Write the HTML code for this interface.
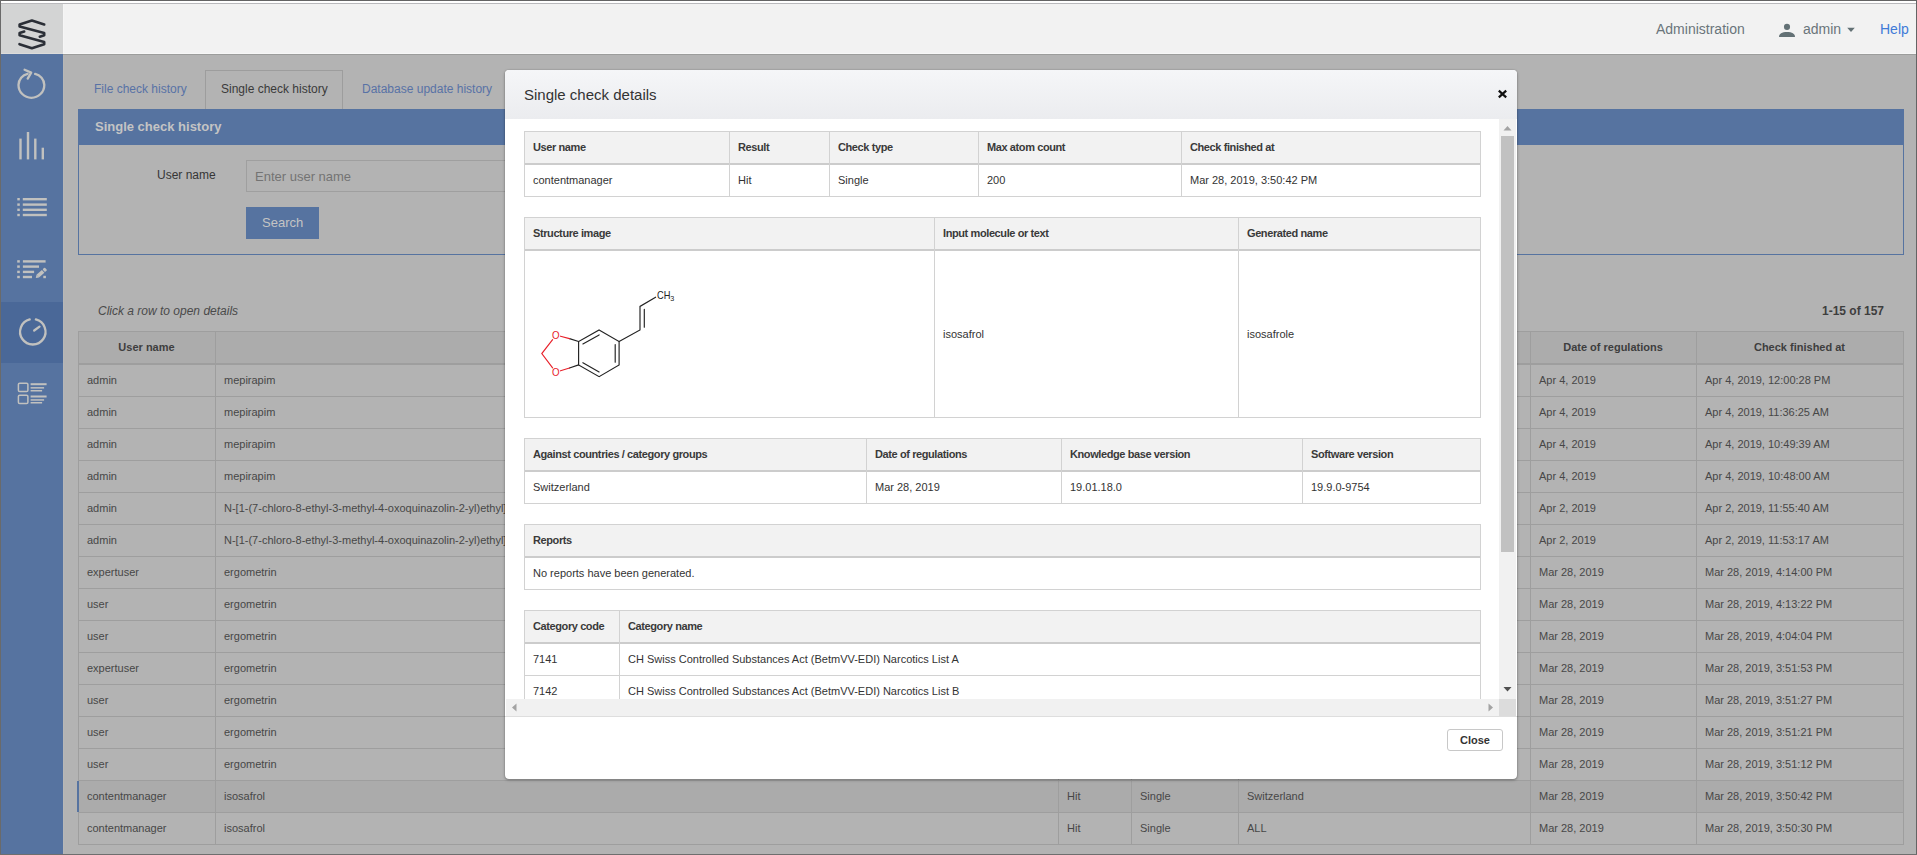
<!DOCTYPE html>
<html><head><meta charset="utf-8">
<style>
*{box-sizing:border-box;margin:0;padding:0}
html,body{width:1917px;height:855px;overflow:hidden;background:#b3b3b3;font-family:"Liberation Sans",sans-serif}
.a{position:absolute}
.t{position:absolute;white-space:nowrap}
.hl{position:absolute;height:1px}
.vl{position:absolute;width:1px}
.bgtxt{color:#474747;font-size:11px;line-height:11px}
.bghd{color:#3e3e3e;font-size:11px;line-height:11px;font-weight:bold}
.mh{font-size:11px;line-height:11px;font-weight:bold;letter-spacing:-0.4px;color:#3a3a3a}
.mb{font-size:11px;line-height:11px;color:#333}
</style></head><body>
<div class="a" style="left:1px;top:4px;width:1915px;height:50px;background:#f2f2f2"></div>
<div class="a" style="left:63px;top:4px;width:1px;height:50px;background:#f5f5f5"></div>
<div class="a" style="left:1px;top:53px;width:1915px;height:1px;background:#f7f7f7"></div>
<div class="a" style="left:1px;top:4px;width:62px;height:50px;background:#d3d4d4"></div>
<div class="a" style="left:1px;top:53px;width:62px;height:1px;background:#dcdcdb"></div>
<div class="a" style="left:1px;top:54px;width:62px;height:800px;background:#5673a0"></div>

<div class="a" style="left:63px;top:54px;width:1853px;height:1px;background:#9c9d9c"></div>
<div class="a" style="left:63px;top:55px;width:1px;height:799px;background:#b7b7b7"></div>
<div class="a" style="left:205px;top:70px;width:138px;height:40px;border:1px solid #9d9d9d;border-bottom:none"></div>
<div class="t" style="left:94px;top:83px;font-size:12px;line-height:12px;color:#5872a6">File check history</div>
<div class="t" style="left:221px;top:83px;font-size:12px;line-height:12px;color:#3a3a3a">Single check history</div>
<div class="t" style="left:362px;top:83px;font-size:12px;line-height:12px;color:#5872a6">Database update history</div>
<div class="a" style="left:78px;top:109px;width:1826px;height:36px;background:#5673a0"></div>
<div class="a" style="left:78px;top:145px;width:1826px;height:110px;border:1px solid #5673a0;border-top:none"></div>
<div class="t" style="left:95px;top:120px;font-size:13px;line-height:13px;font-weight:bold;color:#c4c4c4">Single check history</div>
<div class="t" style="left:157px;top:169px;font-size:12px;line-height:12px;color:#363636">User name</div>
<div class="a" style="left:246px;top:160px;width:600px;height:32px;border:1px solid #9f9f9f"></div>
<div class="t" style="left:255px;top:170px;font-size:13px;line-height:13px;color:#737373">Enter user name</div>
<div class="a" style="left:246px;top:207px;width:73px;height:32px;background:#5673a0"></div>
<div class="t" style="left:262px;top:216px;font-size:13px;line-height:13px;color:#c4c4c4">Search</div>
<div class="t" style="left:98px;top:305px;font-size:12px;line-height:12px;font-style:italic;color:#4a4a4a">Click a row to open details</div>
<div class="t" style="left:1822px;top:305px;font-size:12px;line-height:12px;font-weight:bold;color:#3e3e3e">1-15 of 157</div>
<div class="a" style="left:78px;top:331px;width:1826px;height:32px;background:#acacac"></div>
<div class="a" style="left:78px;top:780px;width:1826px;height:32px;background:#ababab"></div>
<div class="hl" style="left:78px;top:331px;width:1826px;background:#9e9e9e"></div>
<div class="hl" style="left:78px;top:363px;width:1826px;height:2px;background:#9e9e9e"></div>
<div class="hl" style="left:78px;top:396px;width:1826px;background:#9e9e9e"></div>
<div class="hl" style="left:78px;top:428px;width:1826px;background:#9e9e9e"></div>
<div class="hl" style="left:78px;top:460px;width:1826px;background:#9e9e9e"></div>
<div class="hl" style="left:78px;top:492px;width:1826px;background:#9e9e9e"></div>
<div class="hl" style="left:78px;top:524px;width:1826px;background:#9e9e9e"></div>
<div class="hl" style="left:78px;top:556px;width:1826px;background:#9e9e9e"></div>
<div class="hl" style="left:78px;top:588px;width:1826px;background:#9e9e9e"></div>
<div class="hl" style="left:78px;top:620px;width:1826px;background:#9e9e9e"></div>
<div class="hl" style="left:78px;top:652px;width:1826px;background:#9e9e9e"></div>
<div class="hl" style="left:78px;top:684px;width:1826px;background:#9e9e9e"></div>
<div class="hl" style="left:78px;top:716px;width:1826px;background:#9e9e9e"></div>
<div class="hl" style="left:78px;top:748px;width:1826px;background:#9e9e9e"></div>
<div class="hl" style="left:78px;top:780px;width:1826px;background:#9e9e9e"></div>
<div class="hl" style="left:78px;top:812px;width:1826px;background:#9e9e9e"></div>
<div class="hl" style="left:78px;top:844px;width:1826px;background:#9e9e9e"></div>
<div class="vl" style="left:78px;top:331px;height:514px;background:#9e9e9e"></div>
<div class="vl" style="left:215px;top:331px;height:514px;background:#9e9e9e"></div>
<div class="vl" style="left:1058px;top:331px;height:514px;background:#9e9e9e"></div>
<div class="vl" style="left:1131px;top:331px;height:514px;background:#9e9e9e"></div>
<div class="vl" style="left:1238px;top:331px;height:514px;background:#9e9e9e"></div>
<div class="vl" style="left:1530px;top:331px;height:514px;background:#9e9e9e"></div>
<div class="vl" style="left:1696px;top:331px;height:514px;background:#9e9e9e"></div>
<div class="vl" style="left:1903px;top:331px;height:514px;background:#9e9e9e"></div>
<div class="a" style="left:77px;top:781px;width:2px;height:31px;background:#5673a0"></div>
<div class="t bghd" style="left:78px;width:137px;text-align:center;top:342px">User name</div>
<div class="t bghd" style="left:1530px;width:166px;text-align:center;top:342px">Date of regulations</div>
<div class="t bghd" style="left:1696px;width:207px;text-align:center;top:342px">Check finished at</div>
<div class="t bgtxt" style="left:87px;top:375px">admin</div>
<div class="t bgtxt" style="left:224px;top:375px">mepirapim</div>
<div class="t bgtxt" style="left:1539px;top:375px">Apr 4, 2019</div>
<div class="t bgtxt" style="left:1705px;top:375px">Apr 4, 2019, 12:00:28 PM</div>
<div class="t bgtxt" style="left:87px;top:407px">admin</div>
<div class="t bgtxt" style="left:224px;top:407px">mepirapim</div>
<div class="t bgtxt" style="left:1539px;top:407px">Apr 4, 2019</div>
<div class="t bgtxt" style="left:1705px;top:407px">Apr 4, 2019, 11:36:25 AM</div>
<div class="t bgtxt" style="left:87px;top:439px">admin</div>
<div class="t bgtxt" style="left:224px;top:439px">mepirapim</div>
<div class="t bgtxt" style="left:1539px;top:439px">Apr 4, 2019</div>
<div class="t bgtxt" style="left:1705px;top:439px">Apr 4, 2019, 10:49:39 AM</div>
<div class="t bgtxt" style="left:87px;top:471px">admin</div>
<div class="t bgtxt" style="left:224px;top:471px">mepirapim</div>
<div class="t bgtxt" style="left:1539px;top:471px">Apr 4, 2019</div>
<div class="t bgtxt" style="left:1705px;top:471px">Apr 4, 2019, 10:48:00 AM</div>
<div class="t bgtxt" style="left:87px;top:503px">admin</div>
<div class="t bgtxt" style="left:224px;top:503px">N-[1-(7-chloro-8-ethyl-3-methyl-4-oxoquinazolin-2-yl)ethyl]-N-methylbenzamide</div>
<div class="t bgtxt" style="left:1539px;top:503px">Apr 2, 2019</div>
<div class="t bgtxt" style="left:1705px;top:503px">Apr 2, 2019, 11:55:40 AM</div>
<div class="t bgtxt" style="left:87px;top:535px">admin</div>
<div class="t bgtxt" style="left:224px;top:535px">N-[1-(7-chloro-8-ethyl-3-methyl-4-oxoquinazolin-2-yl)ethyl]-N-methylbenzamide</div>
<div class="t bgtxt" style="left:1539px;top:535px">Apr 2, 2019</div>
<div class="t bgtxt" style="left:1705px;top:535px">Apr 2, 2019, 11:53:17 AM</div>
<div class="t bgtxt" style="left:87px;top:567px">expertuser</div>
<div class="t bgtxt" style="left:224px;top:567px">ergometrin</div>
<div class="t bgtxt" style="left:1539px;top:567px">Mar 28, 2019</div>
<div class="t bgtxt" style="left:1705px;top:567px">Mar 28, 2019, 4:14:00 PM</div>
<div class="t bgtxt" style="left:87px;top:599px">user</div>
<div class="t bgtxt" style="left:224px;top:599px">ergometrin</div>
<div class="t bgtxt" style="left:1539px;top:599px">Mar 28, 2019</div>
<div class="t bgtxt" style="left:1705px;top:599px">Mar 28, 2019, 4:13:22 PM</div>
<div class="t bgtxt" style="left:87px;top:631px">user</div>
<div class="t bgtxt" style="left:224px;top:631px">ergometrin</div>
<div class="t bgtxt" style="left:1539px;top:631px">Mar 28, 2019</div>
<div class="t bgtxt" style="left:1705px;top:631px">Mar 28, 2019, 4:04:04 PM</div>
<div class="t bgtxt" style="left:87px;top:663px">expertuser</div>
<div class="t bgtxt" style="left:224px;top:663px">ergometrin</div>
<div class="t bgtxt" style="left:1539px;top:663px">Mar 28, 2019</div>
<div class="t bgtxt" style="left:1705px;top:663px">Mar 28, 2019, 3:51:53 PM</div>
<div class="t bgtxt" style="left:87px;top:695px">user</div>
<div class="t bgtxt" style="left:224px;top:695px">ergometrin</div>
<div class="t bgtxt" style="left:1539px;top:695px">Mar 28, 2019</div>
<div class="t bgtxt" style="left:1705px;top:695px">Mar 28, 2019, 3:51:27 PM</div>
<div class="t bgtxt" style="left:87px;top:727px">user</div>
<div class="t bgtxt" style="left:224px;top:727px">ergometrin</div>
<div class="t bgtxt" style="left:1539px;top:727px">Mar 28, 2019</div>
<div class="t bgtxt" style="left:1705px;top:727px">Mar 28, 2019, 3:51:21 PM</div>
<div class="t bgtxt" style="left:87px;top:759px">user</div>
<div class="t bgtxt" style="left:224px;top:759px">ergometrin</div>
<div class="t bgtxt" style="left:1539px;top:759px">Mar 28, 2019</div>
<div class="t bgtxt" style="left:1705px;top:759px">Mar 28, 2019, 3:51:12 PM</div>
<div class="t bgtxt" style="left:87px;top:791px">contentmanager</div>
<div class="t bgtxt" style="left:224px;top:791px">isosafrol</div>
<div class="t bgtxt" style="left:1067px;top:791px">Hit</div>
<div class="t bgtxt" style="left:1140px;top:791px">Single</div>
<div class="t bgtxt" style="left:1247px;top:791px">Switzerland</div>
<div class="t bgtxt" style="left:1539px;top:791px">Mar 28, 2019</div>
<div class="t bgtxt" style="left:1705px;top:791px">Mar 28, 2019, 3:50:42 PM</div>
<div class="t bgtxt" style="left:87px;top:823px">contentmanager</div>
<div class="t bgtxt" style="left:224px;top:823px">isosafrol</div>
<div class="t bgtxt" style="left:1067px;top:823px">Hit</div>
<div class="t bgtxt" style="left:1140px;top:823px">Single</div>
<div class="t bgtxt" style="left:1247px;top:823px">ALL</div>
<div class="t bgtxt" style="left:1539px;top:823px">Mar 28, 2019</div>
<div class="t bgtxt" style="left:1705px;top:823px">Mar 28, 2019, 3:50:30 PM</div>
<div class="a" style="left:505px;top:70px;width:1012px;height:709px;background:#fff;border-radius:4px;box-shadow:0 1px 3px rgba(0,0,0,0.35),0 0 1px rgba(0,0,0,0.4)"></div>
<div class="a" style="left:505px;top:70px;width:1012px;height:49px;background:linear-gradient(#f5f6f8,#ebecef);border-radius:4px 4px 0 0"></div>
<div class="t" style="left:524px;top:87px;font-size:15px;line-height:15px;color:#333333">Single check details</div>
<svg class="a" style="left:1496px;top:88px" width="13" height="12"><path d="M2.8,2.6 L10.2,9.4 M10.2,2.6 L2.8,9.4" stroke="#111" stroke-width="2.2" stroke-linecap="butt"/></svg>
<div class="a" style="left:506px;top:119px;width:993px;height:580px;overflow:hidden">
<div class="a" style="left:-506px;top:-119px;width:1917px;height:855px">
<div class="a" style="left:524px;top:131px;width:957px;height:33px;background:#f2f2f2"></div>
<div class="hl" style="left:524px;top:131px;width:957px;background:#d2d2d2"></div>
<div class="hl" style="left:524px;top:163px;width:957px;height:2px;background:#cccccc"></div>
<div class="hl" style="left:524px;top:196px;width:957px;background:#d2d2d2"></div>
<div class="vl" style="left:524px;top:131px;height:66px;background:#d2d2d2"></div>
<div class="vl" style="left:729px;top:131px;height:66px;background:#d2d2d2"></div>
<div class="vl" style="left:829px;top:131px;height:66px;background:#d2d2d2"></div>
<div class="vl" style="left:978px;top:131px;height:66px;background:#d2d2d2"></div>
<div class="vl" style="left:1181px;top:131px;height:66px;background:#d2d2d2"></div>
<div class="vl" style="left:1480px;top:131px;height:66px;background:#d2d2d2"></div>
<div class="t mh" style="left:533px;top:142px">User name</div>
<div class="t mh" style="left:738px;top:142px">Result</div>
<div class="t mh" style="left:838px;top:142px">Check type</div>
<div class="t mh" style="left:987px;top:142px">Max atom count</div>
<div class="t mh" style="left:1190px;top:142px">Check finished at</div>
<div class="t mb" style="left:533px;top:175px">contentmanager</div>
<div class="t mb" style="left:738px;top:175px">Hit</div>
<div class="t mb" style="left:838px;top:175px">Single</div>
<div class="t mb" style="left:987px;top:175px">200</div>
<div class="t mb" style="left:1190px;top:175px">Mar 28, 2019, 3:50:42 PM</div>
<div class="a" style="left:524px;top:217px;width:957px;height:33px;background:#f2f2f2"></div>
<div class="hl" style="left:524px;top:217px;width:957px;background:#d2d2d2"></div>
<div class="hl" style="left:524px;top:249px;width:957px;height:2px;background:#cccccc"></div>
<div class="hl" style="left:524px;top:417px;width:957px;background:#d2d2d2"></div>
<div class="vl" style="left:524px;top:217px;height:201px;background:#d2d2d2"></div>
<div class="vl" style="left:934px;top:217px;height:201px;background:#d2d2d2"></div>
<div class="vl" style="left:1238px;top:217px;height:201px;background:#d2d2d2"></div>
<div class="vl" style="left:1480px;top:217px;height:201px;background:#d2d2d2"></div>
<div class="t mh" style="left:533px;top:228px">Structure image</div>
<div class="t mh" style="left:943px;top:228px">Input molecule or text</div>
<div class="t mh" style="left:1247px;top:228px">Generated name</div>
<div class="t mb" style="left:943px;top:329px">isosafrol</div>
<div class="t mb" style="left:1247px;top:329px">isosafrole</div>
<div class="a" style="left:524px;top:438px;width:957px;height:33px;background:#f2f2f2"></div>
<div class="hl" style="left:524px;top:438px;width:957px;background:#d2d2d2"></div>
<div class="hl" style="left:524px;top:470px;width:957px;height:2px;background:#cccccc"></div>
<div class="hl" style="left:524px;top:503px;width:957px;background:#d2d2d2"></div>
<div class="vl" style="left:524px;top:438px;height:66px;background:#d2d2d2"></div>
<div class="vl" style="left:866px;top:438px;height:66px;background:#d2d2d2"></div>
<div class="vl" style="left:1061px;top:438px;height:66px;background:#d2d2d2"></div>
<div class="vl" style="left:1302px;top:438px;height:66px;background:#d2d2d2"></div>
<div class="vl" style="left:1480px;top:438px;height:66px;background:#d2d2d2"></div>
<div class="t mh" style="left:533px;top:449px">Against countries / category groups</div>
<div class="t mh" style="left:875px;top:449px">Date of regulations</div>
<div class="t mh" style="left:1070px;top:449px">Knowledge base version</div>
<div class="t mh" style="left:1311px;top:449px">Software version</div>
<div class="t mb" style="left:533px;top:482px">Switzerland</div>
<div class="t mb" style="left:875px;top:482px">Mar 28, 2019</div>
<div class="t mb" style="left:1070px;top:482px">19.01.18.0</div>
<div class="t mb" style="left:1311px;top:482px">19.9.0-9754</div>
<div class="a" style="left:524px;top:524px;width:957px;height:33px;background:#f2f2f2"></div>
<div class="hl" style="left:524px;top:524px;width:957px;background:#d2d2d2"></div>
<div class="hl" style="left:524px;top:556px;width:957px;height:2px;background:#cccccc"></div>
<div class="hl" style="left:524px;top:589px;width:957px;background:#d2d2d2"></div>
<div class="vl" style="left:524px;top:524px;height:66px;background:#d2d2d2"></div>
<div class="vl" style="left:1480px;top:524px;height:66px;background:#d2d2d2"></div>
<div class="t mh" style="left:533px;top:535px">Reports</div>
<div class="t mb" style="left:533px;top:568px">No reports have been generated.</div>
<div class="a" style="left:524px;top:610px;width:957px;height:33px;background:#f2f2f2"></div>
<div class="hl" style="left:524px;top:610px;width:957px;background:#d2d2d2"></div>
<div class="hl" style="left:524px;top:642px;width:957px;height:2px;background:#cccccc"></div>
<div class="hl" style="left:524px;top:675px;width:957px;background:#d2d2d2"></div>
<div class="hl" style="left:524px;top:707px;width:957px;background:#d2d2d2"></div>
<div class="hl" style="left:524px;top:739px;width:957px;background:#d2d2d2"></div>
<div class="vl" style="left:524px;top:610px;height:130px;background:#d2d2d2"></div>
<div class="vl" style="left:619px;top:610px;height:130px;background:#d2d2d2"></div>
<div class="vl" style="left:1480px;top:610px;height:130px;background:#d2d2d2"></div>
<div class="t mh" style="left:533px;top:621px">Category code</div>
<div class="t mh" style="left:628px;top:621px">Category name</div>
<div class="t mb" style="left:533px;top:654px">7141</div>
<div class="t mb" style="left:628px;top:654px">CH Swiss Controlled Substances Act (BetmVV-EDI) Narcotics List A</div>
<div class="t mb" style="left:533px;top:686px">7142</div>
<div class="t mb" style="left:628px;top:686px">CH Swiss Controlled Substances Act (BetmVV-EDI) Narcotics List B</div>
<div class="t mb" style="left:533px;top:718px">7143</div>
<div class="t mb" style="left:628px;top:718px">CH Swiss Controlled Substances Act (BetmVV-EDI) Narcotics List C</div>
<svg class="a" style="left:0;top:0" width="700" height="420">
<g stroke="#222" stroke-width="1.15" fill="none" stroke-linecap="round">
<path d="M599.1,329.9 L619.1,341.5 L619.1,364.9 L599.1,376.7 L578.6,364.9 L578.6,341.5 Z"/>
<path d="M582.9,344 L599.1,334.9 M615.2,344.5 L615.2,362.2 M582.9,362.7 L599.1,372"/>
<path d="M569.5,338.6 L578.6,341.5 M569.5,368 L578.6,364.9"/>
<path d="M619.1,341.5 L640,329.9 L640,306.4 L655.6,297.2 M644.3,309.2 L644.3,327.2"/>
</g>
<g stroke="#e8202a" stroke-width="1.15" fill="none" stroke-linecap="round">
<path d="M552.6,339.6 L541.8,353.6 L552.6,367.8"/>
<path d="M560.5,336.2 L569.5,338.6 M560.5,370.8 L569.5,368"/>
</g>
<g font-family="Liberation Sans" font-size="10.5px" fill="#e8202a">
<text x="551.9" y="338.6" textLength="7.6" lengthAdjust="spacingAndGlyphs">O</text><text x="551.9" y="376.2" textLength="7.6" lengthAdjust="spacingAndGlyphs">O</text>
</g>
<g font-family="Liberation Sans" fill="#222">
<text x="657" y="298.8" font-size="10.5px" textLength="13.4" lengthAdjust="spacingAndGlyphs">CH</text><text x="670.2" y="301" font-size="7px" textLength="4" lengthAdjust="spacingAndGlyphs">3</text>
</g>
</svg>
</div></div>
<div class="a" style="left:1499px;top:119px;width:17px;height:580px;background:#f1f1f1"></div>
<div class="a" style="left:1501px;top:136px;width:13px;height:416px;background:#c1c1c1"></div>
<svg class="a" style="left:1499px;top:119px" width="17" height="580"><path d="M4.5,11.5 L12.5,11.5 L8.5,7 Z" fill="#a3a3a3"/><path d="M4.5,568 L12.5,568 L8.5,572.5 Z" fill="#505050"/></svg>
<div class="a" style="left:506px;top:699px;width:993px;height:17px;background:#f1f1f1"></div>
<div class="a" style="left:1499px;top:699px;width:17px;height:17px;background:#dcdcdc"></div>
<svg class="a" style="left:506px;top:699px" width="993" height="17"><path d="M10.5,4.5 L10.5,12.5 L6,8.5 Z" fill="#a3a3a3"/><path d="M982.5,4.5 L982.5,12.5 L987,8.5 Z" fill="#a3a3a3"/></svg>
<div class="hl" style="left:505px;top:716px;width:1012px;background:#dedede"></div>
<div class="a" style="left:1447px;top:729px;width:56px;height:22px;border:1px solid #c8c8c8;border-radius:3px;background:#fff"></div>
<div class="t" style="left:1460px;top:735px;font-size:11px;line-height:11px;font-weight:bold;color:#333333">Close</div>
<!-- sidebar -->
<div class="a" style="left:1px;top:302px;width:62px;height:61px;background:#4a6898"></div>
<svg class="a" style="left:0;top:0" width="64" height="420">
<g fill="#c1c1bf"><path d="M35.1,73.9 A11.8,11.8 0 0 1 44.3,84.9 A12.9,12.9 0 0 1 18.5,84.9 A11.8,11.8 0 0 1 27.6,73.8" fill="none" stroke="#c1c1bf" stroke-width="2.3" stroke-linecap="round"/><path d="M24.6,69.8 L31.2,72.6 L27.7,78.6" fill="none" stroke="#c1c1bf" stroke-width="2.3" stroke-linecap="round" stroke-linejoin="round"/><path d="M35.87,319.48 A12.7,12.7 0 1 1 29.73,319.48" fill="none" stroke="#c1c1bf" stroke-width="2.3" stroke-linecap="round"/><path d="M34.2,330.5 L39.5,326.6" fill="none" stroke="#c1c1bf" stroke-width="2.3" stroke-linecap="round"/><rect x="19.3" y="138.6" width="2.4" height="20.8"/><rect x="26.8" y="132" width="2.4" height="27.4"/><rect x="34.1" y="138.6" width="2.4" height="20.8"/><rect x="41.6" y="147.7" width="2.4" height="11.7"/><rect x="17.3" y="198.0" width="2.5" height="2.4"/><rect x="22.8" y="198.0" width="24" height="2.4"/><rect x="17.3" y="203.4" width="2.5" height="2.4"/><rect x="22.8" y="203.4" width="24" height="2.4"/><rect x="17.3" y="208.6" width="2.5" height="2.4"/><rect x="22.8" y="208.6" width="24" height="2.4"/><rect x="17.3" y="213.8" width="2.5" height="2.4"/><rect x="22.8" y="213.8" width="24" height="2.4"/><rect x="17.2" y="260.2" width="2.6" height="2.4"/><rect x="22.9" y="260.2" width="22.7" height="2.4"/><rect x="17.2" y="265.4" width="2.6" height="2.4"/><rect x="22.9" y="265.4" width="16.1" height="2.4"/><rect x="17.2" y="270.7" width="2.6" height="2.4"/><rect x="22.9" y="270.7" width="11.2" height="2.4"/><rect x="17.2" y="275.8" width="2.6" height="2.4"/><rect x="22.9" y="275.8" width="9.1" height="2.4"/><g transform="translate(35.8,277.9) rotate(-42)"><path d="M0,0 L2.7,-1.85 L2.7,1.85 Z"/><rect x="2.6" y="-1.85" width="7.3" height="3.7"/><rect x="10.7" y="-1.85" width="2.9" height="3.7" rx="0.8"/></g><rect x="43.3" y="275.8" width="2.6" height="2.4"/><rect x="18.4" y="383.3" width="9.5" height="8.3" rx="1.3" fill="none" stroke="#c1c1bf" stroke-width="1.5"/><rect x="18.4" y="395.3" width="9.5" height="8.3" rx="1.3" fill="none" stroke="#c1c1bf" stroke-width="1.5"/><rect x="30.6" y="383.2" width="16.0" height="2"/><rect x="30.6" y="387.1" width="13.5" height="1.5"/><rect x="30.6" y="390" width="11.5" height="1.5"/><rect x="30.6" y="395.5" width="16.0" height="2"/><rect x="30.6" y="399.2" width="13.5" height="1.5"/><rect x="30.6" y="402" width="11.5" height="1.5"/></g>
</svg>

<!-- header -->
<svg class="a" style="left:0;top:0" width="64" height="56">
<g fill="none" stroke="#2b2f37" stroke-width="2.6" stroke-linejoin="round" stroke-linecap="round">
<path d="M44.2,24.5 L31.9,20.6 L19.6,24.5 L19.6,26.6 L44.2,33 L44.2,35.3 L39.8,36.7"/>
<path d="M24.2,31.6 L19.6,33 L19.6,35.3 L44.2,42.1 L44.2,44.3 L31.9,48.2 L19.5,44.2"/>
</g></svg>
<div class="t" style="left:1656px;top:22px;font-size:14px;line-height:14px;color:#6a757b">Administration</div>
<svg class="a" style="left:1778px;top:22px" width="20" height="18">
<circle cx="9" cy="4.9" r="3.05" fill="#637175"/>
<path d="M1,15 C1,11.5 4,10 9,10 C14,10 17,11.5 17,15 Z" fill="#637175"/>
</svg>
<div class="t" style="left:1803px;top:22px;font-size:14px;line-height:14px;color:#6a757b">admin</div>
<svg class="a" style="left:1846px;top:27px" width="10" height="6"><path d="M1.2,0.8 L8.8,0.8 L5,5 Z" fill="#637175"/></svg>
<div class="t" style="left:1880px;top:22px;font-size:14px;line-height:14px;color:#3f7bd8">Help</div>


<div class="a" style="left:0;top:0;width:1917px;height:1px;background:#646464"></div>
<div class="a" style="left:0;top:1px;width:1917px;height:2px;background:#fff"></div>
<div class="a" style="left:0;top:3px;width:1917px;height:1px;background:#b9b9bc"></div>
<div class="a" style="left:0;top:0;width:1px;height:855px;background:#6a6a6a"></div>
<div class="a" style="left:1916px;top:0;width:1px;height:855px;background:#646464"></div>
<div class="a" style="left:0;top:854px;width:1917px;height:1px;background:#6e6e6e"></div>
</body></html>
